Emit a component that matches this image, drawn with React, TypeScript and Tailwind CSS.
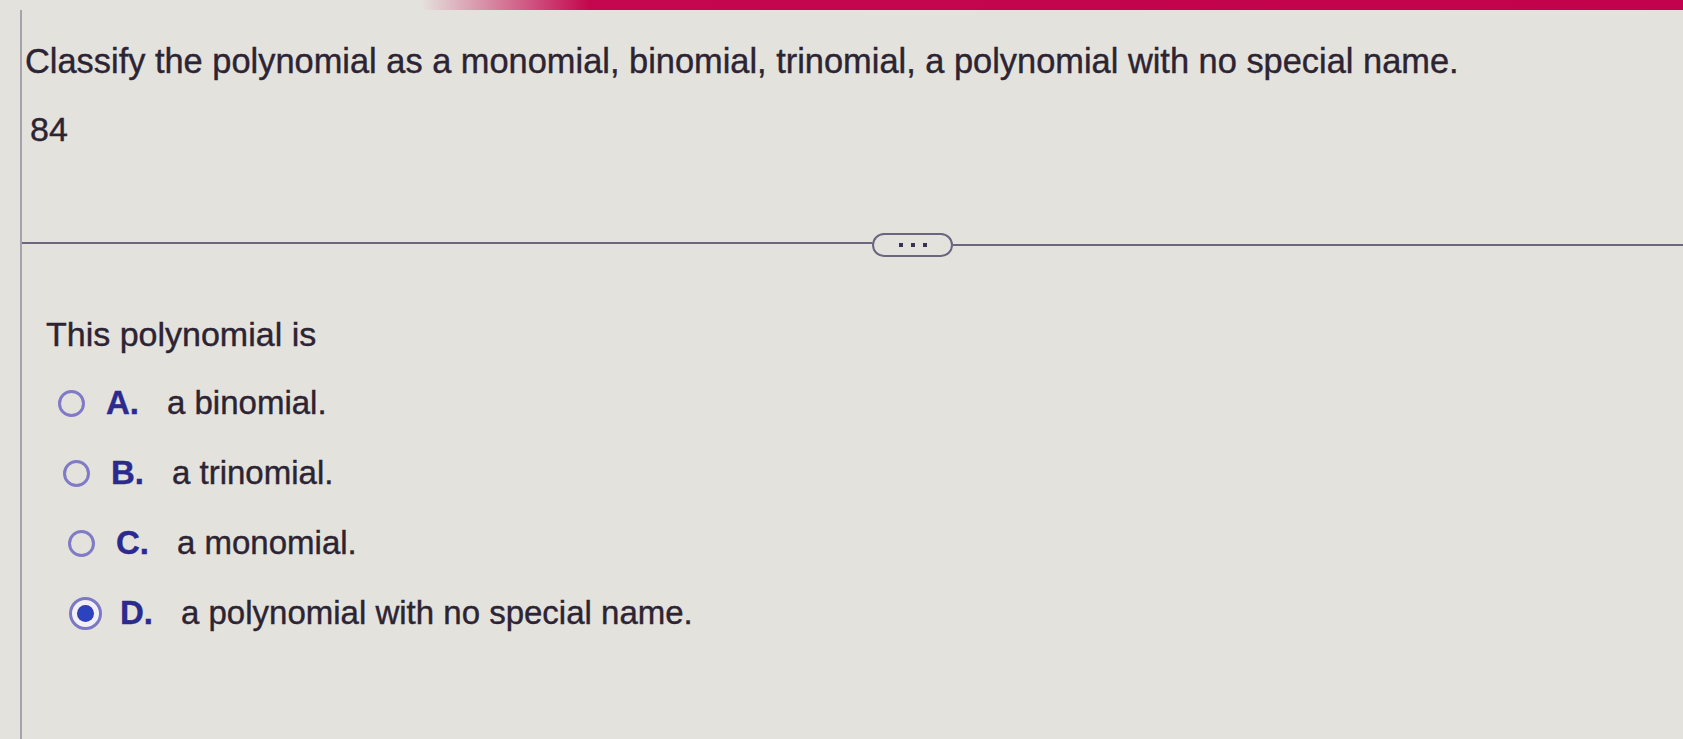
import React from 'react'

const options = [
  { key: 'A', text: 'a binomial.', indent: 'pl-[33px]', selected: false },
  { key: 'B', text: 'a trinomial.', indent: 'pl-[38px]', selected: false },
  { key: 'C', text: 'a monomial.', indent: 'pl-[43px]', selected: false },
  { key: 'D', text: 'a polynomial with no special name.', indent: 'pl-[47px]', selected: true },
]

function Radio({ selected }: { selected: boolean }) {
  if (selected) {
    return (
      <div className="w-[33px] h-[33px] rounded-full border-[3px] border-[#7c78c4] bg-[#f1f0f6] flex items-center justify-center">
        <div className="w-[15px] h-[15px] rounded-full bg-[#2c43c0] ring-1 ring-[#3a3aa0]" />
      </div>
    )
  }
  return <div className="w-[27px] h-[27px] rounded-full border-[3px] border-[#7f7bc6]" />
}

export default function App() {
  return (
    <div className="w-[1683px] h-[739px] overflow-hidden bg-[#e4e2dd] flex flex-col font-['Liberation_Sans',Arial,sans-serif] text-[#2d2433] [-webkit-text-stroke:0.4px_currentColor]">
      {/* top accent bar */}
      <div className="h-[10px] shrink-0 bg-[linear-gradient(90deg,transparent_0%,transparent_25%,#c4074e_35%,#c2024c_100%)]" />

      <div className="ml-[20px] flex-1 border-l-2 border-[#a7a2ab]">
        <h1 className="mt-[31px] pl-[3px] text-[34.4px] leading-[40px]">
          Classify the polynomial as a monomial, binomial, trinomial, a polynomial with no special name.
        </h1>
        <p className="mt-[28px] pl-[8px] text-[34px] leading-[40px]">84</p>

        {/* divider with expand pill */}
        <div className="mt-[80px] flex items-center">
          <div className="w-[850px] h-[2px] bg-[#6c6580]" />
          <div className="w-[81px] h-[24px] mt-[4px] rounded-full border-[2.5px] border-[#6c6580] flex items-center justify-center gap-[8px]">
            <span className="w-[4px] h-[4px] bg-[#3b3152]" />
            <span className="w-[4px] h-[4px] bg-[#3b3152]" />
            <span className="w-[4px] h-[4px] bg-[#3b3152]" />
          </div>
          <div className="flex-1 h-[2px] mt-[4px] bg-[#6c6580]" />
        </div>

        <p className="mt-[57px] pl-[24px] text-[34px] leading-[40px]">This polynomial is</p>

        <div className="mt-[29px] flex flex-col gap-[30px]">
          {options.map(o => (
            <div key={o.key} className={`flex items-center h-[40px] ${o.indent}`}>
              <div className="w-[33px] flex justify-center">
                <Radio selected={o.selected} />
              </div>
              <span className="ml-[18px] w-[61px] text-[33px] font-bold text-[#2b2a8e]">{o.key}.</span>
              <span className="text-[33px]">{o.text}</span>
            </div>
          ))}
        </div>
      </div>
    </div>
  )
}
